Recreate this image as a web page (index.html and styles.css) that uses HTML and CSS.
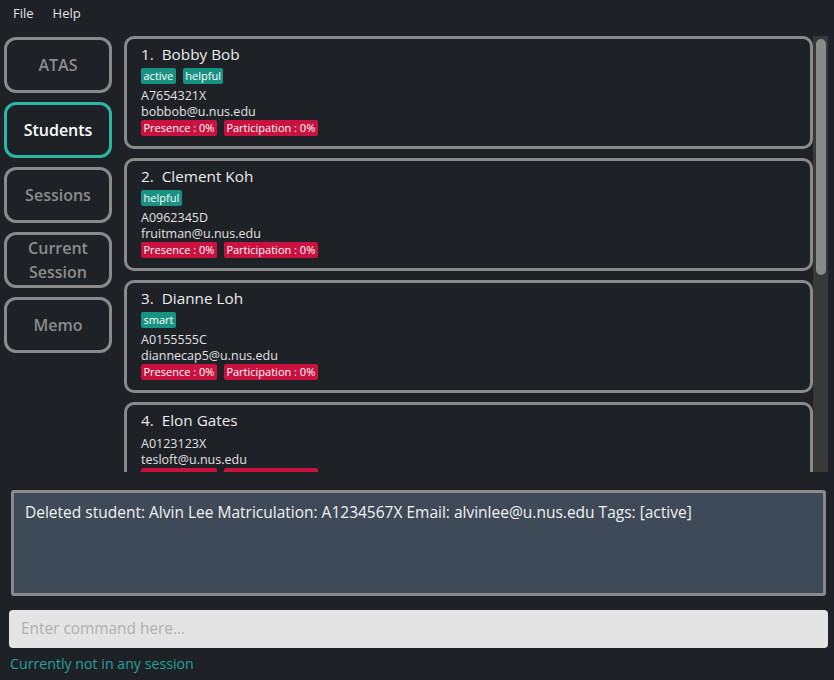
FILE: index.html
```html
<!DOCTYPE html>
<html>
<head>
<meta charset="utf-8">
<link rel="stylesheet" href="styles.css">
</head>
<body>
<div class="menubar"><span class="menu-item">File</span><span class="menu-item">Help</span></div>
<div class="main">
  <div class="sidebar">
    <div class="nav-btn">ATAS</div>
    <div class="nav-btn active">Students</div>
    <div class="nav-btn">Sessions</div>
    <div class="nav-btn">Current<br>Session</div>
    <div class="nav-btn">Memo</div>
  </div>
  <div class="list-wrap">
    <div class="list">
      <div class="card">
        <div class="name">1.&nbsp;&nbsp;Bobby Bob</div>
        <div class="tags"><span class="tag">active</span><span class="tag">helpful</span></div>
        <div class="line">A7654321X</div>
        <div class="line">bobbob@u.nus.edu</div>
        <div class="badges"><span class="badge">Presence : 0%</span><span class="badge">Participation : 0%</span></div>
      </div>
      <div class="card">
        <div class="name">2.&nbsp;&nbsp;Clement Koh</div>
        <div class="tags"><span class="tag">helpful</span></div>
        <div class="line">A0962345D</div>
        <div class="line">fruitman@u.nus.edu</div>
        <div class="badges"><span class="badge">Presence : 0%</span><span class="badge">Participation : 0%</span></div>
      </div>
      <div class="card">
        <div class="name">3.&nbsp;&nbsp;Dianne Loh</div>
        <div class="tags"><span class="tag">smart</span></div>
        <div class="line">A0155555C</div>
        <div class="line">diannecap5@u.nus.edu</div>
        <div class="badges"><span class="badge">Presence : 0%</span><span class="badge">Participation : 0%</span></div>
      </div>
      <div class="card">
        <div class="name">4.&nbsp;&nbsp;Elon Gates</div>
        <div class="line first">A0123123X</div>
        <div class="line">tesloft@u.nus.edu</div>
        <div class="badges"><span class="badge">Presence : 0%</span><span class="badge">Participation : 0%</span></div>
      </div>
    </div>
    <div class="scrollbar"><div class="thumb"></div></div>
  </div>
</div>
<div class="result">Deleted student: Alvin Lee Matriculation: A1234567X Email: alvinlee@u.nus.edu Tags: [active]</div>
<div class="command">Enter command here...</div>
<div class="status">Currently not in any session</div>
</body>
</html>
```
FILE: styles.css
```css
html, body {
  margin: 0;
  padding: 0;
  background: #1e2126;
  font-family: "Open Sans", "Noto Sans", sans-serif;
  width: 834px;
  height: 680px;
  overflow: hidden;
}
.menubar {
  height: 26px;
  display: flex;
  align-items: center;
  padding-left: 13px;
  gap: 19px;
}
.menu-item {
  color: #e2e2e2;
  font-size: 13px;
}
.main {
  display: flex;
  margin-top: 10px;
  height: 436px;
}
.sidebar {
  width: 108px;
  margin-left: 4px;
  padding-top: 1px;
  display: flex;
  flex-direction: column;
  gap: 9px;
}
.nav-btn {
  box-sizing: border-box;
  height: 56px;
  border: 3px solid #8a8a8a;
  border-radius: 12px;
  display: flex;
  align-items: center;
  justify-content: center;
  text-align: center;
  color: #8c8c8c;
  font-size: 16px;
  font-weight: 600;
  line-height: 24px;
}
.nav-btn.active {
  border-color: #2bb6a6;
  color: #ffffff;
}
.list-wrap {
  margin-left: 12px;
  display: flex;
  height: 436px;
}
.list {
  width: 689px;
  height: 436px;
  overflow: hidden;
  display: flex;
  flex-direction: column;
  gap: 9px;
}
.card {
  box-sizing: border-box;
  flex: 0 0 113px;
  border: 3px solid #8a8a8a;
  border-radius: 10px;
  padding: 5px 14px 0 14px;
  color: #e4e4e4;
}
.name {
  font-size: 15.3px;
  line-height: 20px;
  height: 20px;
  color: #ececec;
}
.tags, .badges {
  display: flex;
  gap: 7px;
}
.tags {
  margin-top: 4px;
  margin-bottom: 4px;
}
.line.first {
  margin-top: 6px;
}
.badges {
  margin-top: 0;
}
.tag, .badge {
  font-size: 11px;
  line-height: 16px;
  height: 16px;
  padding: 0 2.5px;
  border-radius: 2px;
  color: #ffffff;
}
.tag { background: #1a9283; }
.badge { background: #c9123f; }
.line {
  font-size: 12.5px;
  line-height: 16px;
  color: #e2e2e2;
}
.scrollbar {
  width: 15px;
  background: #393939;
  height: 436px;
  position: relative;
}
.thumb {
  position: absolute;
  left: 3px;
  top: 3px;
  width: 10px;
  height: 236px;
  border-radius: 5px;
  background: #8a8a8a;
}
.result {
  box-sizing: border-box;
  margin: 18px 8px 0 11px;
  height: 106px;
  border: 3px solid #8a8a8a;
  border-radius: 3px;
  background: #3e4a57;
  color: #f2f2f2;
  font-size: 15.5px;
  padding: 9px 11px;
  line-height: 20px;
}
.command {
  box-sizing: border-box;
  margin: 14px 6px 0 9px;
  height: 38px;
  background: #e4e4e4;
  border-radius: 4px;
  color: #b0b0b0;
  font-size: 15.4px;
  line-height: 38px;
  padding-left: 12px;
}
.status {
  margin: 7px 0 0 10px;
  color: #22a393;
  font-size: 14.2px;
  font-weight: 500;
  line-height: 18px;
}
```
